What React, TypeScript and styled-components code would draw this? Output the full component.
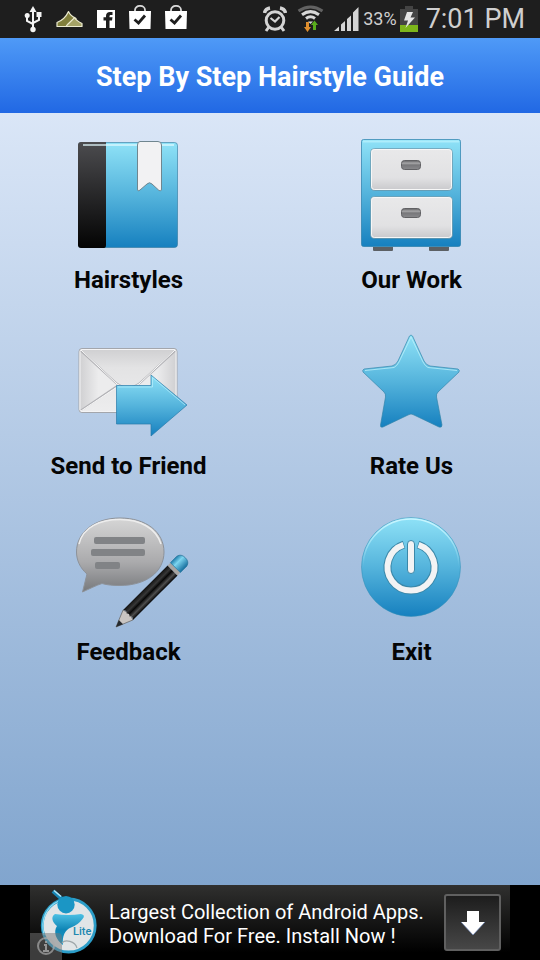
import React from "react";
import styled, { createGlobalStyle } from "styled-components";

const GlobalStyle = createGlobalStyle`
  *, *::before, *::after { box-sizing: border-box; }
  body { margin: 0; font-family: Roboto, "Liberation Sans", sans-serif; }
  svg { display: block; flex: none; }
`;

const Screen = styled.div`
  display: flex;
  flex-direction: column;
  min-height: 100vh;
  background: #000;
`;

const StatusBar = styled.div`
  display: flex;
  align-items: center;
  justify-content: space-between;
  height: 38px;
  padding: 0 15px 0 24px;
  background: #1e1e1e;
  color: #cfcfcf;
`;

const StatusGroup = styled.div<{ $gap: number }>`
  display: flex;
  align-items: center;
  gap: ${(p) => p.$gap}px;
`;

const PowerLevel = styled.div`
  display: flex;
  align-items: center;
  gap: 3px;
  margin-left: -6px;
  font-size: 18px;
  line-height: 24px;
`;

const Clock = styled.time`
  margin-left: -2px;
  font-size: 27px;
  line-height: 36px;
`;

const TitleBar = styled.header`
  display: flex;
  align-items: center;
  justify-content: center;
  height: 75px;
  background: linear-gradient(#4f9af7, #2168e4);
  color: #fff;
`;

const Title = styled.h1`
  margin: 0;
  padding-top: 2px;
  font-size: 27px;
  line-height: 36px;
  font-weight: 700;
`;

const Menu = styled.main`
  flex: 1;
  display: grid;
  grid-template-columns: 1fr 1fr;
  align-content: start;
  gap: 23px 26px;
  padding: 18px 0 24px;
  background: linear-gradient(#dae6f7, #81a5ce);
`;

const Tile = styled.button`
  display: flex;
  flex-direction: column;
  align-items: center;
  gap: 7px;
  padding: 0;
  border: 0;
  background: none;
  color: #050505;
  font: 700 24px/28px Roboto, "Liberation Sans", sans-serif;
  cursor: pointer;
`;

const AdBar = styled.aside`
  display: flex;
  justify-content: center;
  height: 75px;
  background: #000;
`;

const Ad = styled.div`
  display: flex;
  align-items: center;
  width: 100%;
  max-width: 480px;
  padding-right: 9px;
  background: linear-gradient(#30302f, #000 90%);
`;

const AdText = styled.a`
  flex: 1;
  padding: 3px 0 0 4px;
  color: #fff;
  font-size: 20px;
  line-height: 24px;
  text-decoration: none;
`;

const AdLine = styled.span`
  display: block;
`;

const DownloadButton = styled.button`
  display: grid;
  place-items: center;
  width: 57px;
  height: 57px;
  padding: 0;
  border: 2px solid #606060;
  border-radius: 3px;
  background: linear-gradient(#1d1d1d, #474747);
`;

const UsbIcon = () => (
  <svg width="18" height="28" viewBox="0 0 18 28" fill="none" stroke="#f4f4f4" strokeWidth="2">
    <path d="M9 5V24M9 19L3 16V10M9 18L15 15V8" />
    <path d="M5.5 7L9 1L12.500 7Z" fill="#f4f4f4" stroke="none" />
    <circle cx="9" cy="24.500" r="2.700" fill="#f4f4f4" stroke="none" />
    <circle cx="3.200" cy="10.500" r="2.500" fill="#f4f4f4" stroke="none" />
    <path d="M12.500 7H17.500V12H12.500Z" fill="#f4f4f4" stroke="none" />
  </svg>
);

const DuneIcon = () => (
  <svg width="27" height="18" viewBox="0 0 27 18" stroke="#ecebd0" strokeWidth="1.200" strokeLinejoin="round">
    <path d="M1 16.500V12.500C5 11 10 7 12.500 1.500C14 5 17 7 20 8.500L16 16.500Z" fill="#817f3c" />
    <path d="M10 16.500C12 13 16 11 18.500 7.500C20 10 23 12 26 13.500V16.500Z" fill="#a5a367" />
  </svg>
);

const FacebookIcon = () => (
  <svg width="18" height="18" viewBox="0 0 18 18">
    <path d="M0 0H18V18H0Z" fill="#fff" />
    <path d="M9 18V10.500H6.500V7.300H9V6C9 3.500 10.500 2 13 2H15.500V5H14C13 5 12.500 5.500 12.500 6.300V7.300H15.500L15 10.500H12.500V18Z" fill="#1e1e1e" />
  </svg>
);

const BagIcon = () => (
  <svg width="22" height="29" viewBox="1 0 22 29" fill="none">
    <path d="M7 7V5C7 -.500 17 -.500 17 5V7" stroke="#d8d8d8" strokeWidth="1.800" />
    <path d="M1 6H23L22.500 24H1.500Z" fill="#fff" />
    <path d="M6.500 14.500L10.500 18L17 10.500" stroke="#1e1e1e" strokeWidth="2.800" />
  </svg>
);

const AlarmIcon = () => (
  <svg width="24" height="26" viewBox="0 0 24 26" fill="none" stroke="#d4d4d4">
    <circle cx="12" cy="14.500" r="8.800" strokeWidth="3" />
    <path d="M7.500 12L12 15.500L16.500 11" strokeWidth="2.200" />
    <path d="M5.500 21.500L3 25M18.500 21.500L21 25" strokeWidth="3" />
    <path d="M1.500 7C2 4 4 2.500 7 2M22.500 7C22 4 20 2.500 17 2" strokeWidth="3.500" />
  </svg>
);

const WifiIcon = () => (
  <svg width="27" height="28" viewBox="0 0 27 28" fill="none" strokeWidth="3">
    <path d="M1.500 6Q13.500 -2 25.500 6" stroke="#626262" />
    <path d="M5 9.700Q13.500 3.500 22 9.700" stroke="#d7d7d7" />
    <path d="M9 13.500Q13.500 10 18 13.500" stroke="#d7d7d7" />
    <path d="M11 16.500H16L13.500 19Z" fill="#d7d7d7" />
    <path d="M9 17H12V22H14L10.500 27L7 22H9Z" fill="#e08f2d" />
    <path d="M16 25H19V20H21L17.500 15.500L14 20H16Z" fill="#5aad1d" />
  </svg>
);

const SignalIcon = () => (
  <svg width="25" height="24" viewBox="0 0 25 24" fill="#d4d4d4">
    <path d="M0 24L5 19.500V24ZM7 17.500L11 14V24H7ZM13 12L17 8.500V24H13ZM19 5.500L24.500 0V24H19Z" />
  </svg>
);

const BatteryIcon = () => (
  <svg width="18" height="26" viewBox="0 0 18 26">
    <path d="M0 3H5V0H13V3H18V26H0Z" fill="#444" />
    <path d="M0 19H18V26H0Z" fill="#7db51b" />
    <path d="M7 6H13L10.500 11.500H15L5.500 22L8 14.500H4Z" fill="#e5e5e5" />
  </svg>
);

const IconDefs = () => (
  <svg width="0" height="0" aria-hidden="true">
    <defs>
      <linearGradient id="aqua" x2="0" y2="1">
        <stop stopColor="#8fe2f7" />
        <stop offset=".5" stopColor="#55b4dc" />
        <stop offset="1" stopColor="#1680bf" />
      </linearGradient>
      <linearGradient id="spine" x2="0" y2="1">
        <stop stopColor="#4c4c4f" />
        <stop offset="1" stopColor="#030303" />
      </linearGradient>
      <linearGradient id="paper" x2="0" y2="1">
        <stop stopColor="#e9e9ea" />
        <stop offset=".7" stopColor="#e1e1e3" />
        <stop offset="1" stopColor="#c8c8cb" />
      </linearGradient>
      <linearGradient id="steel" x2="0" y2="1">
        <stop stopColor="#5e5e61" />
        <stop offset=".3" stopColor="#a6a6a8" />
        <stop offset=".5" stopColor="#77777a" />
        <stop offset="1" stopColor="#89898c" />
      </linearGradient>
      <linearGradient id="mail" x2="0" y2="1">
        <stop stopColor="#cfcfd1" />
        <stop offset=".3" stopColor="#e3e3e4" />
        <stop offset="1" stopColor="#ededee" />
      </linearGradient>
      <linearGradient id="flapLeft">
        <stop stopColor="#d0d0d2" />
        <stop offset=".5" stopColor="#ececed" />
      </linearGradient>
      <linearGradient id="flapRight">
        <stop offset=".5" stopColor="#ececed" />
        <stop offset="1" stopColor="#d0d0d2" />
      </linearGradient>
      <linearGradient id="bubble" x2="0" y2="1">
        <stop stopColor="#d6d6d6" />
        <stop offset=".6" stopColor="#aaaaac" />
        <stop offset="1" stopColor="#77797c" />
      </linearGradient>
      <linearGradient id="pencil" x2="0" y2="1">
        <stop stopColor="#111" />
        <stop offset=".3" stopColor="#373737" />
        <stop offset=".5" stopColor="#080808" />
        <stop offset=".75" stopColor="#4d4d4d" />
        <stop offset="1" stopColor="#050505" />
      </linearGradient>
      <linearGradient id="eraser" x2="0" y2="1">
        <stop stopColor="#2280ad" />
        <stop offset=".35" stopColor="#7dd5ef" />
        <stop offset="1" stopColor="#176f9f" />
      </linearGradient>
      <linearGradient id="shine" x2="0" y2="1">
        <stop stopColor="#c8f5ff" />
        <stop offset=".5" stopColor="#c8f5ff" stopOpacity="0" />
      </linearGradient>
      <linearGradient id="figure" x2="0" y2="1">
        <stop stopColor="#4cc0e4" />
        <stop offset=".5" stopColor="#0f86b6" />
        <stop offset="1" stopColor="#1697c6" />
      </linearGradient>
    </defs>
  </svg>
);

const TileIcon = ({ children }: { children: React.ReactNode }) => (
  <svg width="121" height="128" viewBox="0 0 121 128" fill="none" aria-hidden="true">
    {children}
  </svg>
);

const BookIcon = () => (
  <TileIcon>
    <rect x="10.500" y="11.500" width="99" height="105" rx="3" fill="url(#aqua)" stroke="#2e789d" strokeOpacity=".6" />
    <path d="M38 11H13Q10 11 10 14V114Q10 117 13 117H36Q38 117 38 114Z" fill="url(#spine)" />
    <path d="M15 14H106" stroke="#e4faff" strokeOpacity=".65" strokeWidth="2" />
    <path d="M72 10.500H90Q93.500 10.500 93.500 14V58Q93.500 61 90.500 59L84 53Q81.500 50.500 79 53L72 59Q69.500 61 69.500 58V14Q69.500 10.500 72 10.500Z" fill="#f2f2f3" stroke="#70868f" />
  </TileIcon>
);

const Drawer = ({ y }: { y: number }) => (
  <g>
    <rect x="19.500" y={y} width="82" height="42" rx="4" fill="url(#paper)" stroke="#4787a2" strokeOpacity=".6" />
    <rect x="20.500" y={y + 1} width="80" height="40" rx="3" stroke="#f7f7f7" />
    <rect x="50.500" y={y + 12} width="19" height="9" rx="3" fill="url(#steel)" stroke="#616164" />
  </g>
);

const CabinetIcon = () => (
  <TileIcon>
    <path d="M22 116H42V119Q42 120 41 120H23Q22 120 22 119ZM78 116H98V119Q98 120 97 120H79Q78 120 78 119Z" fill="#5c6064" />
    <rect x="10.500" y="8.500" width="99" height="107" rx="2" fill="url(#aqua)" stroke="#287eaa" strokeOpacity=".7" />
    <path d="M12 10.500H108" stroke="#c5f5ff" strokeOpacity=".6" strokeWidth="2" />
    <Drawer y={17.5} />
    <Drawer y={65.5} />
  </TileIcon>
);

const SendIcon = () => (
  <TileIcon>
    <rect x="11" y="31.500" width="98" height="64" rx="3" fill="url(#mail)" stroke="#a3a6ac" />
    <path d="M12 33L49 68L12 94Z" fill="url(#flapLeft)" />
    <path d="M108 33L70 68L108 94Z" fill="url(#flapRight)" />
    <path d="M12 33L48 66Q60 75 72 66L108 33M12 94L49 69M108 94L71 69" stroke="#b2b2b6" strokeWidth="2" />
    <path d="M13 33L49 67Q60 75 71 67L107 33M13 94L49 70M107 94L71 70" stroke="#fafafa" />
    <rect x="12" y="32.500" width="96" height="62" rx="2" stroke="#f4f4f5" />
    <path d="M48.500 68.500H83V58L119 88L83 119V107H48.500Z" fill="url(#aqua)" stroke="#287ba9" strokeOpacity=".7" strokeLinejoin="round" />
    <path d="M50 70H84.500V60.500L117 88" stroke="#b9effc" strokeOpacity=".7" />
  </TileIcon>
);

const StarIcon = () => (
  <TileIcon>
    <path d="M58.500 19Q60 17 61.500 19L73 44Q75 48 79 49L107 52Q109 53 108 55L87 75Q85 77 85.500 80L91 108Q91 111 88 110L63 98Q60 96 57 98L32 110Q29 111 29.500 108L34.500 80Q35 77 33 75L12 55Q11 53 13 52L41 49Q45 48 47 44Z" fill="url(#aqua)" stroke="#2f82a8" strokeOpacity=".65" />
    <path d="M14 53.500L43 50.500Q46 49 48 45L60 20L72 45Q74 49 77 50.500L106 53.500" stroke="#c0f2fb" strokeOpacity=".75" />
  </TileIcon>
);

const FeedbackIcon = () => (
  <TileIcon>
    <path d="M52 15C78 15 96 29 96 49S78 82.500 52 82.500C45 82.500 39 82 34 80.500C29 82 21 86 14.500 89L19 71C12 65 8.500 57 8.500 49C8.500 29 27 15 52 15Z" fill="url(#bubble)" stroke="#8d9299" />
    <path d="M11 41C15 24 32 16.500 52 16.500S88 25 93 41" stroke="#ededed" strokeWidth="1.500" />
    <g fill="#818386">
      <rect x="26" y="34" width="51" height="7" rx="2" />
      <rect x="23" y="46" width="54" height="7" rx="2" />
      <rect x="27" y="59" width="25" height="7" rx="2" />
    </g>
    <g transform="translate(48 124) rotate(-45)">
      <path d="M0 0L17 -7Q20 0 17 7Z" fill="#c9c5c2" stroke="#626262" strokeWidth=".7" />
      <path d="M0 0L7 -3V3Z" fill="#252a2e" />
      <path d="M17 -7H80V7H17Q20 4 17 2Q20 0 17 -2Q20 -4 17 -7Z" fill="url(#pencil)" />
      <rect x="80" y="-7" width="4" height="14" fill="#a8a5a2" />
      <path d="M84 -7H93Q98 -6 98 0T93 7H84Z" fill="url(#eraser)" stroke="#26769b" strokeWidth=".7" />
    </g>
  </TileIcon>
);

const ExitIcon = () => (
  <TileIcon>
    <circle cx="60" cy="64" r="49.500" fill="url(#aqua)" stroke="#338fb6" strokeOpacity=".5" />
    <circle cx="60" cy="64" r="48" stroke="url(#shine)" strokeWidth="1.500" />
    <path d="M53 41.500A23.500 23.500 0 1 0 67 41.500" stroke="#3b88a9" strokeWidth="8" />
    <path d="M52.500 41.800A23.500 23.500 0 1 0 67.500 41.800" stroke="#f2f3f4" strokeWidth="6" />
    <rect x="56.500" y="37.500" width="7" height="33" rx="3.500" fill="#f2f3f4" stroke="#3b88a9" />
  </TileIcon>
);

const AdLogo = () => (
  <svg width="75" height="75" viewBox="0 0 75 75" fill="none" role="img" aria-label="Lite">
    <circle cx="38.700" cy="40.500" r="26.500" fill="#e1e5e7" stroke="#2b9dc8" strokeWidth="2.800" />
    <path d="M14 50C10 34 17 21 29 16" stroke="#8edcf3" strokeWidth="1.200" />
    <path d="M23 6L33 15" stroke="#1785b4" strokeWidth="4" />
    <path d="M24 5.500L31 11.500" stroke="#bce7f4" strokeWidth="1.500" />
    <circle cx="36" cy="19.700" r="8.700" fill="#1b96c5" />
    <path d="M25 29Q38 31 51 29Q56 30 52.500 34Q48 40 41 42.500C35 45 32 51 33 60C26 55 23 47 27 41C23 38 20 32 25 29Z" fill="url(#figure)" />
    <path d="M32 58C35 54 45 56 47 63" stroke="#9fa7aa" strokeWidth="1.200" />
    <text x="43" y="50" fill="#2087b0" fontFamily="Roboto, sans-serif" fontSize="11" fontWeight="500">Lite</text>
    <path d="M0 48H28Q32 48 32 53V75H0Z" fill="#777" fillOpacity=".5" />
    <circle cx="16" cy="61" r="8" stroke="#aaa" strokeOpacity=".7" strokeWidth="2" />
    <path d="M16 56V58M14 60H16V66M13 66H19" stroke="#aaa" strokeOpacity=".8" strokeWidth="2" />
  </svg>
);

const DownArrowIcon = () => (
  <svg width="24" height="24" viewBox="0 0 24 24" aria-hidden="true">
    <path d="M6 0H18V11H24L12 24L0 11H6Z" fill="#fff" />
    <path d="M0 11L12 24L24 11" fill="none" stroke="#6883b5" strokeWidth=".7" />
  </svg>
);

const tiles = [
  { label: "Hairstyles", Icon: BookIcon },
  { label: "Our Work", Icon: CabinetIcon },
  { label: "Send to Friend", Icon: SendIcon },
  { label: "Rate Us", Icon: StarIcon },
  { label: "Feedback", Icon: FeedbackIcon },
  { label: "Exit", Icon: ExitIcon },
];

export default function App() {
  return (
    <Screen>
      <GlobalStyle />
      <StatusBar>
        <StatusGroup $gap={14}>
          <UsbIcon />
          <DuneIcon />
          <FacebookIcon />
          <BagIcon />
          <BagIcon />
        </StatusGroup>
        <StatusGroup $gap={10}>
          <AlarmIcon />
          <WifiIcon />
          <SignalIcon />
          <PowerLevel>
            <span>33%</span>
            <BatteryIcon />
          </PowerLevel>
          <Clock>7:01 PM</Clock>
        </StatusGroup>
      </StatusBar>
      <TitleBar>
        <Title>Step By Step Hairstyle Guide</Title>
      </TitleBar>
      <Menu>
        {tiles.map(({ label, Icon }) => (
          <Tile key={label} type="button">
            <Icon />
            {label}
          </Tile>
        ))}
      </Menu>
      <AdBar>
        <Ad>
          <AdLogo />
          <AdText href="#install">
            <AdLine>Largest Collection of Android Apps.</AdLine>
            <AdLine>Download For Free. Install Now !</AdLine>
          </AdText>
          <DownloadButton type="button" aria-label="Download">
            <DownArrowIcon />
          </DownloadButton>
        </Ad>
      </AdBar>
      <IconDefs />
    </Screen>
  );
}
